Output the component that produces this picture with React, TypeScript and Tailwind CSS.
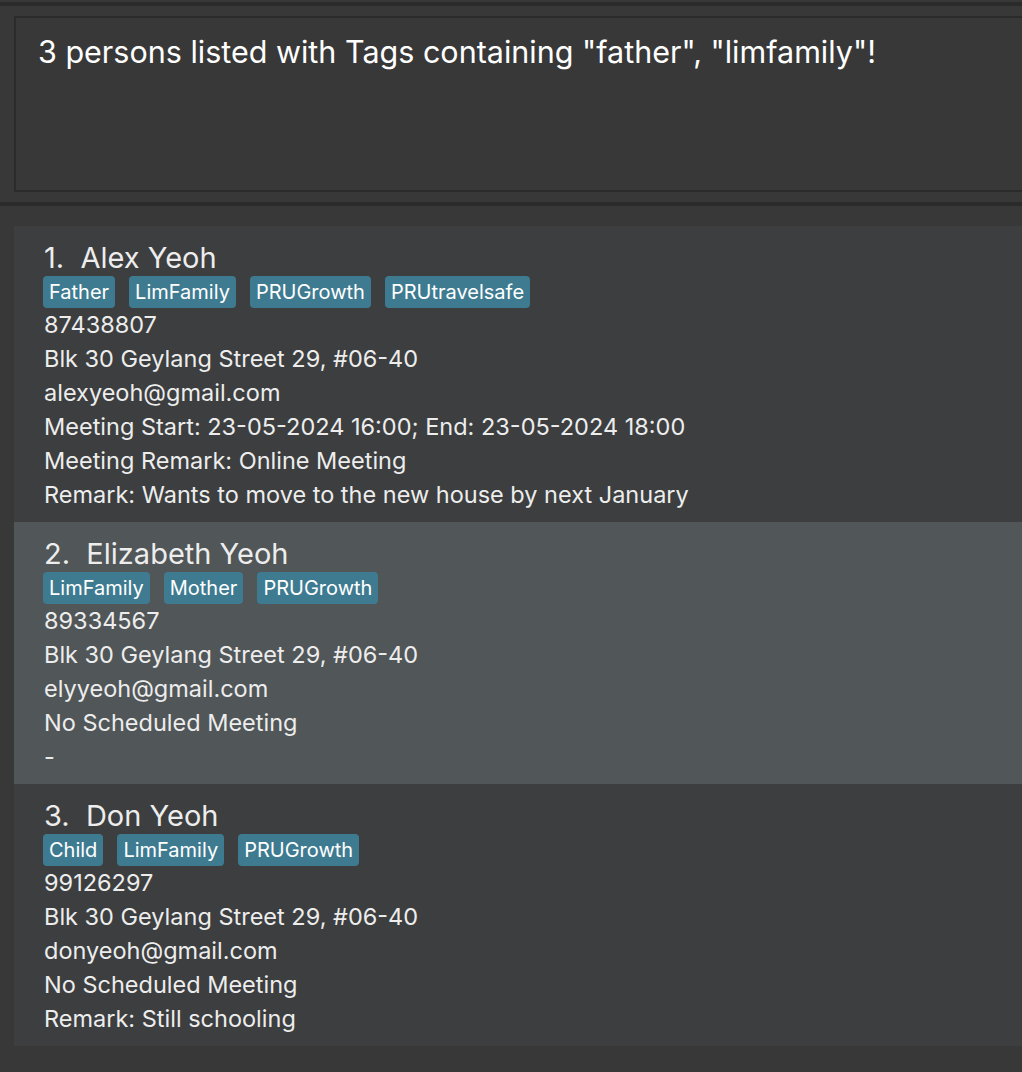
import React from "react";

type Person = {
  name: string;
  tags: string[];
  lines: string[];
};

const people: Person[] = [
  {
    name: "Alex Yeoh",
    tags: ["Father", "LimFamily", "PRUGrowth", "PRUtravelsafe"],
    lines: [
      "87438807",
      "Blk 30 Geylang Street 29, #06-40",
      "alexyeoh@gmail.com",
      "Meeting Start: 23-05-2024 16:00; End: 23-05-2024 18:00",
      "Meeting Remark: Online Meeting",
      "Remark: Wants to move to the new house by next January",
    ],
  },
  {
    name: "Elizabeth Yeoh",
    tags: ["LimFamily", "Mother", "PRUGrowth"],
    lines: [
      "89334567",
      "Blk 30 Geylang Street 29, #06-40",
      "elyyeoh@gmail.com",
      "No Scheduled Meeting",
      "-",
    ],
  },
  {
    name: "Don Yeoh",
    tags: ["Child", "LimFamily", "PRUGrowth"],
    lines: [
      "99126297",
      "Blk 30 Geylang Street 29, #06-40",
      "donyeoh@gmail.com",
      "No Scheduled Meeting",
      "Remark: Still schooling",
    ],
  },
];

const PersonCard = ({ p, index }: { p: Person; index: number }) => {
  // alternating row colours, like the JavaFX list cells
  const bg = index % 2 === 0 ? "bg-[#3c3e3f]" : "bg-[#515658]";
  return (
    <div className={`${bg} pl-[30px] pt-[13px] pb-[10px] text-[#ededed]`}>
      <div className="h-[36px] flex items-center text-[29px] whitespace-pre leading-none">
        {index + 1}.  {p.name}
      </div>
      <div className="flex gap-[14px] mt-[1px] -ml-[1px]">
        {p.tags.map((t) => (
          <span
            key={t}
            className="h-[32px] flex items-center px-[6px] rounded-[4px] bg-[#3e7b91] text-white text-[20px] leading-none"
          >
            {t}
          </span>
        ))}
      </div>
      {p.lines.map((l, i) => (
        <div key={i} className="h-[34px] flex items-center text-[23.5px] leading-none whitespace-nowrap">
          {l}
        </div>
      ))}
    </div>
  );
};

export default function App() {
  return (
    <div className="w-[1022px] h-[1072px] bg-[#383838] overflow-hidden font-['Inter','Noto_Sans',sans-serif]">
      <div className="h-[2px]" />
      <div className="h-[4px] bg-[#2b2b2b]" />

      {/* result display */}
      <div className="pt-[10px] pl-[14px]">
        <div className="h-[176px] border-2 border-r-0 border-[#2b2b2b] bg-[#383838] pl-[22px] pt-[16px]">
          <div className="h-[36px] flex items-center text-[30.5px] text-white leading-none whitespace-nowrap">
            3 persons listed with Tags containing "father", "limfamily"!
          </div>
        </div>
      </div>

      <div className="h-[10px]" />
      <div className="h-[4px] bg-[#2b2b2b]" />

      {/* person list */}
      <div className="pt-[20px] pl-[14px]">
        {people.map((p, i) => (
          <PersonCard key={p.name} p={p} index={i} />
        ))}
      </div>
    </div>
  );
}
